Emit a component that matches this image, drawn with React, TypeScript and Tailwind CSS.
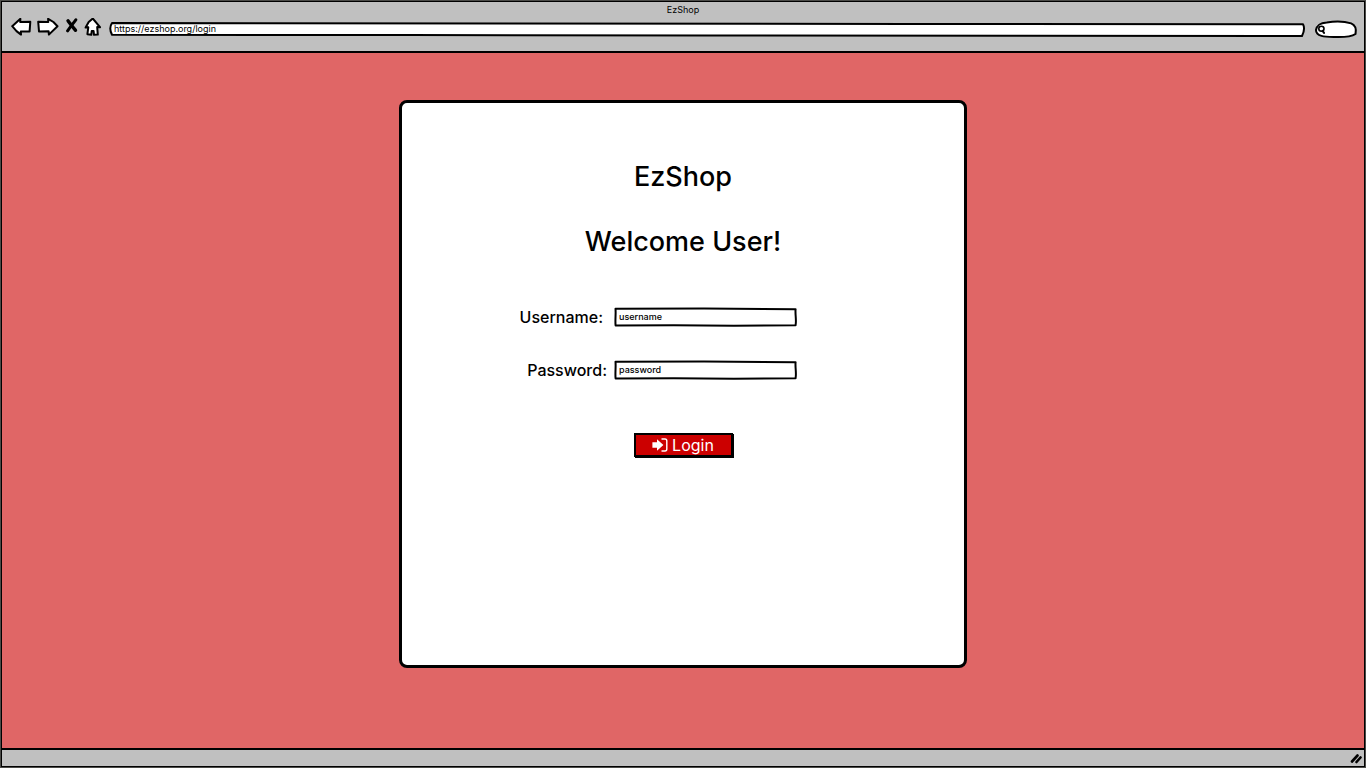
import type { ReactNode } from "react";

function SketchBox({ d, box, fill = "white" }: { d: string; box: string; fill?: string }) {
  return (
    <svg
      aria-hidden="true"
      className="pointer-events-none absolute inset-0 h-full w-full overflow-visible"
      viewBox={box}
      preserveAspectRatio="none"
    >
      <path d={d} fill={fill} stroke="black" strokeWidth="2" strokeLinejoin="round" vectorEffect="non-scaling-stroke" />
    </svg>
  );
}

function NavButton({ label, width, children }: { label: string; width: string; children: ReactNode }) {
  return (
    <button type="button" aria-label={label} className={`${width} h-5 shrink-0`}>
      {children}
    </button>
  );
}

function BrowserBar() {
  return (
    <header className="border-b-2 border-black bg-[#c0c0c0] pb-[13px]">
      <div className="h-4 text-center text-[9px] leading-4">EzShop</div>
      <div className="flex items-start pr-[7px] pl-[9px]">
        <div className="flex items-center">
          <NavButton label="Back" width="mr-1 w-[22px]">
            <svg viewBox="0 0 22 20" className="h-5 w-[22px]" fill="white" stroke="black" strokeWidth="2" strokeLinejoin="round">
              <path d="M1.2 8.2 9.4 .8 9.2 4 19.3 3.7 18.6 13.4 9.8 13.4 10 16.6 5.5 13.1Z" />
            </svg>
          </NavButton>
          <NavButton label="Forward" width="mr-[6px] w-[22px]">
            <svg viewBox="0 0 22 20" className="h-5 w-[22px]" fill="white" stroke="black" strokeWidth="2" strokeLinejoin="round">
              <path d="M1.2 3.7 11.3 4 11.1 .8 16.4 4 20.5 8.2 11.9 16.6 11.6 13.2 2 13.4Z" />
            </svg>
          </NavButton>
          <NavButton label="Stop" width="mr-[5px] w-[14px]">
            <svg viewBox="0 0 14 20" className="h-5 w-[14px]" fill="none" stroke="black" strokeLinecap="round">
              <path d="M3 2.8C5.5 6.1 7.5 9.1 10.5 12.2" strokeWidth="3.4" />
              <path d="M10.8 1.8C8 5.6 5.5 8.6 2.6 12.8" strokeWidth="3" />
            </svg>
          </NavButton>
          <NavButton label="Home" width="mr-[7px] w-[18px]">
            <svg viewBox="0 0 18 20" className="h-5 w-[18px]" fill="white" stroke="black" strokeWidth="2" strokeLinejoin="round">
              <path d="M8.8.5 16 9.2 13.2 9.1 13.8 16.6 10 16.8 9.6 13.1 7.7 13.1 7.3 16.8 3.4 16.2 4.3 9.3 1.6 9.6 4.7 4.1Z" />
            </svg>
          </NavButton>
        </div>
        <div className="relative mt-1 h-[15px] flex-1">
          <SketchBox
            box="0 0 1196 15"
            d="M3 1C1 4 1 9 3 12.8L300 13 600 13.4 900 13.7 1193 14C1195 10 1195.5 5 1194 2.2L800 1.9 400 1.5Z"
          />
          <input
            aria-label="Address"
            defaultValue="https://ezshop.org/login"
            className="relative block h-[13px] w-full bg-transparent px-[5px] text-[9px] leading-[13px] outline-none"
          />
        </div>
        <div className="relative mt-[2px] ml-[10px] h-[18px] w-[42px]">
          <SketchBox box="0 0 43 18" d="M1 10C2 5 5 3 12 2.4 20 1.2 30 1.2 37 3.4 42 5.4 42.5 9 41.5 14 37 16.9 28 17.4 19 17 10 16.8 1 16.6 1 10Z" />
          <svg aria-hidden="true" viewBox="0 0 10 10" className="absolute top-1 left-[2px] h-[10px] w-[10px]" fill="none" stroke="black" strokeLinecap="round">
            <ellipse cx="4.4" cy="4.8" rx="2.6" ry="2.5" strokeWidth="1.6" />
            <path d="M5.6 6.9 7 8.9" strokeWidth="2" />
          </svg>
          <input aria-label="Search" className="relative block h-full w-full bg-transparent pr-2 pl-3 text-[9px] outline-none" />
        </div>
      </div>
    </header>
  );
}

function Field({ id, label, type, placeholder, gap }: { id: string; label: string; type: string; placeholder: string; gap: string }) {
  return (
    <div className="flex items-center">
      <label htmlFor={id} className={`w-[212px] text-right text-base leading-5 font-medium ${gap}`}>
        {label}
      </label>
      <div className="relative h-5 w-[183px]">
        <SketchBox box="0 0 183 20" d="M1.5 1.8 90 1.6 181.6 2.2C181 7 182.6 13 181.6 18.2L120 18.8 60 18.2 1.6 18.5C1 13 2 7 1.5 1.8Z" />
        <input
          id={id}
          type={type}
          placeholder={placeholder}
          className="relative block h-[18px] w-full bg-transparent px-[5px] text-[9px] font-medium text-black outline-none placeholder:text-black placeholder:opacity-100"
        />
      </div>
    </div>
  );
}

export default function App() {
  return (
    <div className="min-h-screen bg-[#4b4b48] p-px font-['Inter',sans-serif] text-black">
      <div className="flex min-h-[calc(100vh-2px)] flex-col border border-black bg-[#e06666]">
        <BrowserBar />
        <main className="flex flex-1 items-start justify-center px-4 pt-[47px] pb-16">
          <form
            onSubmit={(event) => event.preventDefault()}
            className="flex aspect-square w-full max-w-[568px] flex-col rounded-lg border-3 border-black bg-white pt-14"
          >
            <h1 className="text-center text-[27px] leading-9 font-medium">EzShop</h1>
            <h2 className="mt-[29px] text-center text-[27px] leading-9 font-medium">Welcome User!</h2>
            <div className="mt-[47px] flex flex-col gap-[33px]">
              <Field id="username" label="Username:" type="text" placeholder="username" gap="pr-[11px]" />
              <Field id="password" label="Password:" type="password" placeholder="password" gap="pr-[7px]" />
            </div>
            <button
              type="submit"
              className="mt-[53px] flex h-6 w-[99px] items-center justify-center gap-1 self-center border-2 border-black bg-[#cc0000] text-base text-white shadow-[1px_1px_0_#000]"
            >
              <svg aria-hidden="true" viewBox="0 0 16 14" className="h-[14px] w-4" fill="white">
                <path d="M.4 4.2H5V1.2L11.4 7 5 12.8V9.8H.4Z" />
                <path d="M10 1H13Q14.8 1 14.8 3V11Q14.8 13 13 13H10" fill="none" stroke="white" strokeWidth="1.4" strokeLinecap="round" />
              </svg>
              Login
            </button>
          </form>
        </main>
        <footer className="flex h-[18px] items-center justify-end border-t-2 border-black bg-[#c0c0c0] pr-[2px]">
          <svg aria-hidden="true" viewBox="0 0 12 12" className="h-3 w-3" stroke="black" strokeWidth="2.6" strokeLinecap="round">
            <path d="M2 9.5 7.5 3.5M6.5 10 10.5 5.5" />
          </svg>
        </footer>
      </div>
    </div>
  );
}
